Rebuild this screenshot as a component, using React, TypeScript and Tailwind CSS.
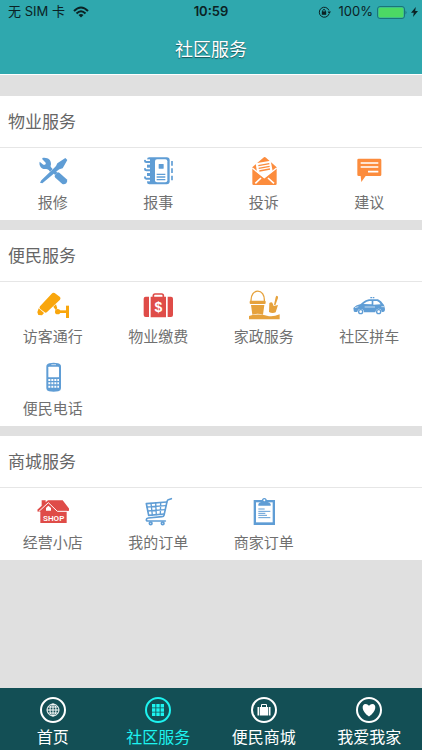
import { useState } from "react";
import type { ReactNode } from "react";

type Item = {
  label: string;
  icon: ReactNode;
  color: string;
};

type Section = {
  title: string;
  items: Item[];
};

const Icon = ({ children }: { children: ReactNode }) => (
  <svg viewBox="0 0 96 90" className="h-[30px] w-8" fill="currentColor" aria-hidden="true">
    {children}
  </svg>
);

const ToolsIcon = () => (
  <Icon>
    <path d="M16 10 26 20c2 4-3 8-7 6L8 17c-3 11 5 23 17 22 4 0 7 0 10 3l4 5 8-8-5-5c-2-3-1-5 0-9C43 12 32 3 16 6z" />
    <path d="M9 80 13 73 52 35 57 30 61 22 85 6 91 12 77 37 67 40 61 44 16 82z" />
    <path d="M54 57 60 50Q63 47 67 50L89 70Q94 76 88 82 82 86 76 84L55 65Q51 61 54 57z" />
    <path d="M49 51 56 45 61 50 54 57z" />
  </Icon>
);

const NotebookIcon = () => (
  <Icon>
    <path d="M22 4H74Q83 4 83 13V76Q83 85 74 85H22Q15 85 15 78V11Q15 4 22 4z" />
    <rect x="39" y="10" width="37" height="69" rx="6" fill="white" />
    <rect x="50" y="24" width="15" height="14" rx="1" />
    <path d="M44 55H70M44 63H70M44 71H70" stroke="currentColor" strokeWidth="4" />
    {[18, 43, 68].map((y) => (
      <g key={y}>
        <path d={`M13 ${y - 8}H24V${y + 8}H13z`} fill="white" />
        <path d={`M27 ${y}H13Q9 ${y} 9 ${y - 4}`} stroke="currentColor" strokeWidth="6" fill="none" strokeLinecap="round" />
      </g>
    ))}
    <path d="M90 15V29M90 37V51M90 59V73" stroke="currentColor" strokeWidth="5" />
  </Icon>
);

const LetterIcon = () => (
  <Icon>
    <path d="M13 34 46 5Q50 1 54 5L86 34V83Q86 87 82 87H17Q13 87 13 83z" />
    <path d="M23 22 68 14 74 46 49 66 27 49z" fill="white" />
    <path d="M31 29 64 23M32 37 65 31M34 45 66 39" stroke="currentColor" strokeWidth="4" />
    <path d="M13 36 49 65 86 36" stroke="white" strokeWidth="4" fill="none" />
    <path d="M22 82 39 66M78 82 60 66" stroke="white" strokeWidth="5" />
  </Icon>
);

const ChatIcon = () => (
  <Icon>
    <path d="M17 8H81Q85 8 85 12V56Q85 60 81 60H38L25 78 23 60H17Q13 60 13 56V12Q13 8 17 8z" />
    <path d="M23 21H76M23 33H76M45 47H76" stroke="white" strokeWidth="5" />
  </Icon>
);

const CameraIcon = () => (
  <Icon>
    <path d="M44 11Q48 6 53 9L69 21Q72 25 69 29L30 66Q26 70 22 66L9 56Q6 53 9 49z" />
    <path d="M5 55 21 69 15 76 4 75 1 67z" />
    <path d="M49 50 57 43 61 55 56 60z" />
    <circle cx="62" cy="65" r="8" />
    <path d="M62 61H88V69H62z" />
    <path d="M87 47H96V84H87z" />
  </Icon>
);

const SuitcaseIcon = () => (
  <Icon>
    <path d="M11 20H21V81H11Q5 81 5 75V26Q5 20 11 20zM77 20H87Q93 20 93 26V75Q93 81 87 81H77zM26 20H72V82H26z" />
    <path d="M34 21V17Q34 12 39 12H59Q64 12 64 17V21" fill="none" stroke="currentColor" strokeWidth="5" />
    <text x="49" y="65" textAnchor="middle" fill="white" fontSize="42" fontWeight="700" fontFamily="Liberation Sans, sans-serif">
      $
    </text>
  </Icon>
);

const BucketIcon = () => (
  <Icon>
    <path d="M9 34C7 -7 52 -7 49 34" fill="none" stroke="currentColor" strokeWidth="4" />
    <rect x="5" y="32" width="48" height="10" rx="3" />
    <path d="M9 45H49L45 74Q28 69 13 74z" />
    <path d="M3 78Q30 69 57 77 73 82 95 73V88H3z" />
    <path d="M86 17Q92 18 90 24L82 46 78 44 83 22Q84 17 86 17z" />
    <path d="M64 39Q73 33 75 43L77 48 90 45 83 67Q73 71 63 66z" />
  </Icon>
);

const CarIcon = () => (
  <Icon>
    <path d="M1 54Q8 45 23 42 38 29 48 28H75Q84 31 93 45L96 57Q96 66 90 66H86Q85 56 77 56T67 67H33Q32 57 23 57T13 66H5Q1 65 2 61z" />
    <path d="M31 42Q42 33 49 33H56V43zM61 33H72Q79 36 83 43L61 44z" fill="white" />
    <path d="M35 51H66M6 53 16 50M85 50H93" stroke="white" strokeWidth="2" />
    <circle cx="23" cy="65" r="6" fill="none" stroke="currentColor" strokeWidth="4" />
    <circle cx="77" cy="65" r="6" fill="none" stroke="currentColor" strokeWidth="4" />
    <path d="M52 21H57V25H52zM59 21H64V25H59z" />
  </Icon>
);

const PhoneIcon = () => (
  <Icon>
    <path d="M37 4Q50 1 63 4 72 6 72 14V79Q72 86 64 88 50 90 36 88 28 86 28 79V14Q28 6 37 4z" />
    <rect x="34" y="14" width="32" height="32" rx="2" fill="white" />
    <path d="M43 8H57" stroke="white" strokeWidth="2" />
    {[51, 61, 71].map((y) => (
      <path key={y} d={`M34 ${y}h6v6h-6zM43 ${y}h6v6h-6zM52 ${y}h6v6h-6zM61 ${y}h5v6h-5z`} fill="white" />
    ))}
  </Icon>
);

const ShopIcon = () => (
  <Icon>
    <path d="M14 13H26V19L33 13H77L97 39 95 45H89V81H10V47H2L1 41 14 29z" />
    <path d="M5 47 34 20 61 46H91" fill="none" stroke="white" strokeWidth="3" />
    <path d="M27 44V36L34 29 42 36V44z" fill="white" />
    <text x="50" y="74" textAnchor="middle" fill="white" fontSize="24" fontWeight="600" fontFamily="Roboto, sans-serif">
      SHOP
    </text>
  </Icon>
);

const CartIcon = () => (
  <Icon>
    <g fill="none" stroke="currentColor" strokeLinecap="round" strokeLinejoin="round">
      <path d="M88 8 79 11Q76 13 75 17L66 58Q65 62 60 62L19 66Q13 67 13 71T19 75H70" strokeWidth="5" />
      <path d="M13 23 74 18M13 23 20 58 66 54" strokeWidth="5" />
      <path d="M15 33 71 29M17 45 69 41M27 22 31 57M41 21 43 56M56 20 55 55" strokeWidth="4" />
      <circle cx="26" cy="82" r="4" strokeWidth="5" />
      <circle cx="62" cy="82" r="4" strokeWidth="5" />
    </g>
  </Icon>
);

const ClipboardIcon = () => (
  <Icon>
    <path d="M17 12H81V87H17z" />
    <path d="M24 19H74V79H24z" fill="white" />
    <path d="M31 29V24Q32 19 41 17 41 6 49 6T57 17Q66 19 68 24V29z" />
    <circle cx="49" cy="13" r="3" fill="white" />
    <path d="M31 39H50M31 46H67M31 52H52M31 58H57M31 65H67" stroke="currentColor" strokeWidth="3" />
  </Icon>
);

const sections: Section[] = [
  {
    title: "物业服务",
    items: [
      { label: "报修", icon: <ToolsIcon />, color: "text-[#5f9dd5]" },
      { label: "报事", icon: <NotebookIcon />, color: "text-[#5f9dd5]" },
      { label: "投诉", icon: <LetterIcon />, color: "text-[#fc8c3d]" },
      { label: "建议", icon: <ChatIcon />, color: "text-[#fc8c3d]" },
    ],
  },
  {
    title: "便民服务",
    items: [
      { label: "访客通行", icon: <CameraIcon />, color: "text-[#f9a60c]" },
      { label: "物业缴费", icon: <SuitcaseIcon />, color: "text-[#df4c48]" },
      { label: "家政服务", icon: <BucketIcon />, color: "text-[#e6a23c]" },
      { label: "社区拼车", icon: <CarIcon />, color: "text-[#5f9dd5]" },
      { label: "便民电话", icon: <PhoneIcon />, color: "text-[#5f9dd5]" },
    ],
  },
  {
    title: "商城服务",
    items: [
      { label: "经营小店", icon: <ShopIcon />, color: "text-[#df4c48]" },
      { label: "我的订单", icon: <CartIcon />, color: "text-[#5f9dd5]" },
      { label: "商家订单", icon: <ClipboardIcon />, color: "text-[#5f9dd5]" },
    ],
  },
];

const tabs = [
  {
    label: "首页",
    icon: (
      <g fill="none" stroke="currentColor" strokeWidth="1">
        <circle cx="14" cy="14" r="6" />
        <ellipse cx="14" cy="14" rx="3" ry="6" />
        <path d="M14 8V20M8 14H20M9 11H19M9 17H19" />
      </g>
    ),
  },
  {
    label: "社区服务",
    icon: (
      <path d="M8 8h3.400v3.400H8zM12.300 8h3.400v3.400h-3.400zM16.600 8h3.400v3.400h-3.400zM8 12.300h3.400v3.400H8zM12.300 12.300h3.400v3.400h-3.400zM16.600 12.300h3.400v3.400h-3.400zM8 16.600h3.400v3.400H8zM12.300 16.600h3.400v3.400h-3.400zM16.600 16.600h3.400v3.400h-3.400z" />
    ),
  },
  {
    label: "便民商城",
    icon: (
      <>
        <path d="M7.500 11H9V19.500H7.500zM9.700 11H18.300V19.500H9.700zM19 11H20.500V19.500H19z" />
        <path d="M11.500 11V8.500H16.500V11" fill="none" stroke="currentColor" />
      </>
    ),
  },
  {
    label: "我爱我家",
    icon: <path d="M14 20.500C6 15 6.500 8 10.500 8 12.500 8 13.500 9 14 10 14.500 9 15.500 8 17.500 8 21.500 8 22 15 14 20.500z" />,
  },
];

const StatusBar = () => (
  <div className="grid h-6 grid-cols-3 items-center px-2 text-[13px] text-[#0b2224]">
    <div className="flex items-center gap-2">
      <span>无 SIM 卡</span>
      <svg viewBox="0 0 16 12" className="h-3 w-4" fill="none" stroke="currentColor" strokeWidth="2" aria-hidden="true">
        <path d="M1 5Q8 -2 15 5M3.500 7.500Q8 3 12.500 7.500" />
        <path d="M5.500 9Q8 7 10.500 9L8 11.500z" fill="currentColor" stroke="none" />
      </svg>
    </div>
    <span className="text-center font-semibold">10:59</span>
    <div className="-mr-1 flex items-center justify-end gap-1">
      <svg viewBox="0 0 13 12" className="mr-1 h-3 w-[13px]" fill="none" stroke="currentColor" aria-hidden="true">
        <path d="M11 8A5 5 0 1 1 11 4.500" />
        <path d="M9.500 5.500H13L11.200 8z" fill="currentColor" stroke="none" />
        <path d="M3.800 5.500H8.200V8.800H3.800z" fill="currentColor" stroke="none" />
        <path d="M4.700 6V4.500Q6 2 7.300 4.500V6" />
      </svg>
      <span>100%</span>
      <svg viewBox="0 0 30 13" className="h-[13px] w-[30px]" aria-hidden="true">
        <rect x="0.500" y="0.500" width="27" height="12" rx="2.500" fill="none" stroke="#1b7579" />
        <rect x="1.500" y="1.500" width="25" height="10" rx="1.500" fill="#4cd964" />
        <path d="M28.500 4.500Q30.500 6.500 28.500 8.500z" fill="#1b7579" />
      </svg>
      <svg viewBox="0 0 7 10" className="h-[10px] w-[7px]" fill="currentColor" aria-hidden="true">
        <path d="M4.800 0 0 5.700H2.800L2 10 7 4H4.200z" />
      </svg>
    </div>
  </div>
);

const App = () => {
  const [active, setActive] = useState("社区服务");

  return (
    <div className="flex min-h-screen flex-col bg-[#e0e0e0] font-['Inter','Noto_Sans_CJK_SC',sans-serif]">
      <header className="border-b border-white bg-[#2fa8ae]">
        <StatusBar />
        <h1 className="h-[50px] text-center text-lg leading-[52px] text-white [text-shadow:0_1px_1px_rgba(0,0,0,0.5)]">
          社区服务
        </h1>
      </header>

      <main className="flex flex-1 flex-col gap-2.5 pt-[21px] pb-4">
        {sections.map((section) => (
          <section key={section.title} className="bg-white">
            <h2 className="h-[52px] border-b border-[#e6e6e6] px-2 text-[17px] leading-[52px] text-[#666]">
              {section.title}
            </h2>
            <div className="grid grid-cols-4">
              {section.items.map((item) => (
                <button key={item.label} type="button" className="flex h-[72px] flex-col items-center gap-[7px] pt-2">
                  <span className={item.color}>{item.icon}</span>
                  <span className="text-[15px] leading-5 text-[#707070]">{item.label}</span>
                </button>
              ))}
            </div>
          </section>
        ))}
      </main>

      <nav className="sticky bottom-0 grid h-[62px] grid-cols-4 bg-[#134f55]">
        {tabs.map((tab) => (
          <a
            key={tab.label}
            href="#"
            onClick={() => setActive(tab.label)}
            className={`flex flex-col items-center pt-2 ${active === tab.label ? "text-[#1df3f0]" : "text-white"}`}
          >
            <svg viewBox="0 0 28 28" className="size-7" fill="currentColor" aria-hidden="true">
              <circle cx="14" cy="14" r="12" fill="none" stroke="currentColor" strokeWidth="2" />
              {tab.icon}
            </svg>
            <span className="text-base leading-[26px]">{tab.label}</span>
          </a>
        ))}
      </nav>
    </div>
  );
};

export default App;
